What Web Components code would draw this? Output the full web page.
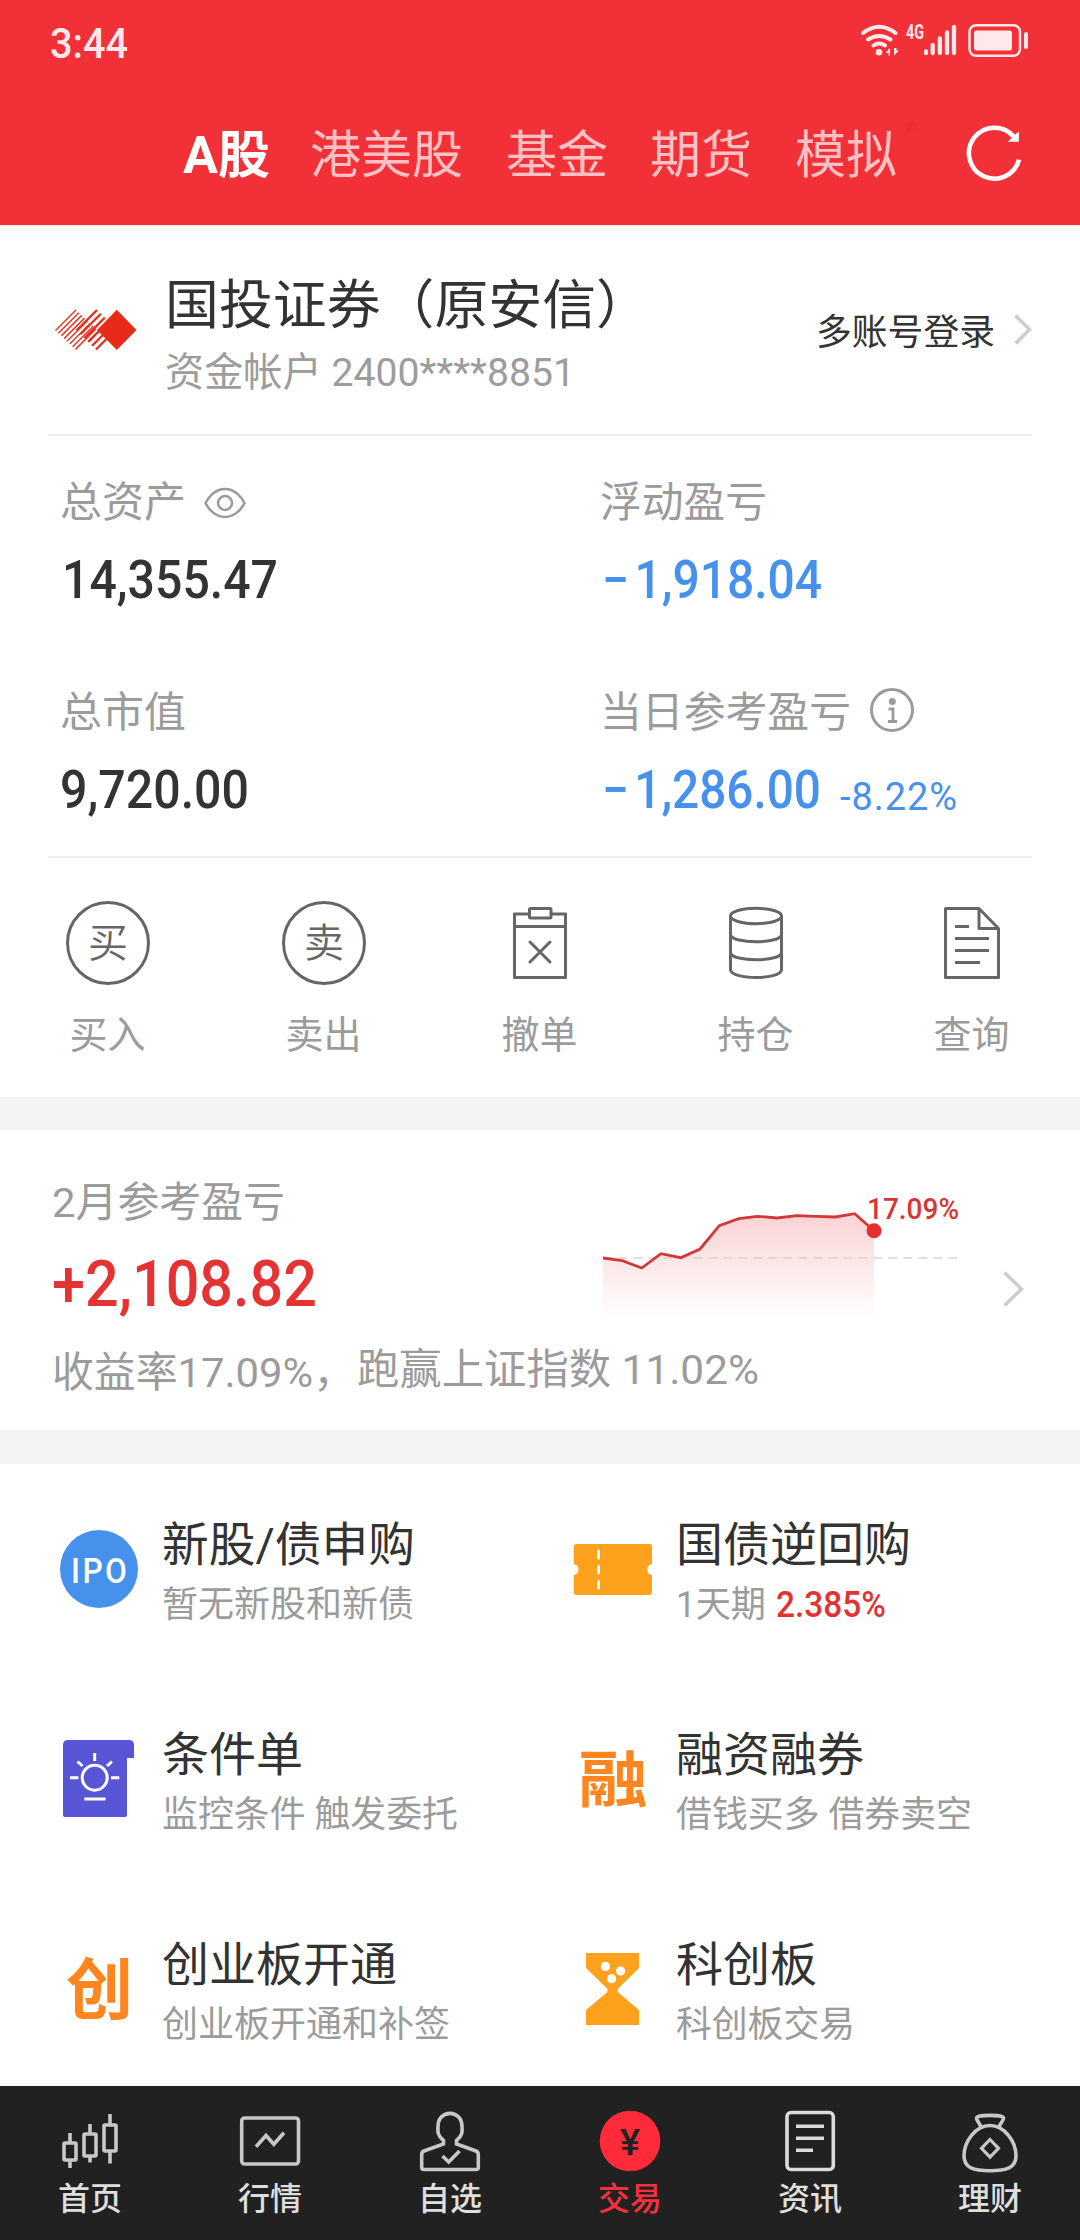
<!DOCTYPE html>
<html lang="zh-CN">
<head>
<meta charset="utf-8">
<title>交易</title>
<style>
html,body{margin:0;padding:0;background:#fff}
body{width:1080px;height:2240px;overflow:hidden;font-family:Roboto,"Noto Sans CJK SC",sans-serif;color:#333}
</style>
</head>
<body>
<trade-app></trade-app>
<script>
const define=(name,html,setup)=>{
  const t=document.createElement('template');t.innerHTML=html;
  customElements.define(name,class extends HTMLElement{
    connectedCallback(){
      if(this.shadowRoot)return;
      this.attachShadow({mode:'open'}).appendChild(t.content.cloneNode(true));
      if(setup)setup.call(this,this.shadowRoot);
    }
  });
};

/* Single line of text condensed or expanded to an exact advance width */
define('fit-text',`<style>:host{display:block;white-space:nowrap;flex:none}span{display:inline-block;transform-origin:0 50%}</style><span><slot></slot></span>`,
function(r){
  const w=+this.getAttribute('w'),s=r.querySelector('span');
  this.style.width=w+'px';
  const n=s.getBoundingClientRect().width;
  if(n)s.style.transform='scaleX('+(w/n)+')';
});

define('status-bar',`<style>
:host{display:flex;height:84px;justify-content:space-between;padding:0 52px 0 50px;color:#ffe8ea;box-sizing:border-box}
fit-text{font-size:42px;line-height:87px;font-weight:500}
svg{display:block;flex:none}
.r{display:flex;align-items:flex-start;padding-top:20px}
.g{font-size:19.5px;font-weight:700;line-height:20px;margin:3px 0 0 5px}
</style>
<fit-text w="78">3:44</fit-text>
<div class="r">
<svg width="42" height="40" viewBox="859 20 42 40" fill="none" stroke="#ffe8ea" stroke-width="4" stroke-linecap="round">
<path d="M863 33Q879 20.500 895.500 33M868 39.500Q879 32.500 890.500 39.500M873.500 45.500Q879 41.500 885 45.500"/>
<circle cx="879" cy="52.300" r="3.300" fill="#ffe8ea" stroke="none"/>
<path d="M886 52.500L890 47.500V55.500H888.500V53H886ZM894 48V55.500L899 50.500H896.500V48Z" fill="#ffe8ea" stroke="none"/></svg>
<fit-text class="g" w="18">4G</fit-text>
<svg width="104" height="40" viewBox="924 20 104 40">
<g stroke="#ffe8ea" stroke-width="4.300" stroke-linecap="round"><path d="M926 51.500V53M932.700 45V53M939.900 38.500V53M947 32.500V53M954 27V53"/></g>
<rect x="969.500" y="25.300" width="50.500" height="30.500" rx="6.500" fill="none" stroke="#ffe8ea" stroke-width="2.400"/>
<rect x="974" y="30.500" width="38" height="20" rx="2.500" fill="#ffe8ea"/>
<rect x="1024" y="32" width="4" height="17" rx="2" fill="#ffe8ea"/></svg>
</div>`);

define('market-tabs',`<style>
:host{display:flex;height:141px;padding:0 54px 0 183px;align-items:flex-start;box-sizing:border-box;color:#ffc0c4;font-size:51px;line-height:60px}
fit-text{margin:42px 42.500px 0 0}
.on{color:#fff;font-weight:700;margin-right:40px}
svg{display:block;margin-top:33px}
.last{margin-right:5px}
</style>
<fit-text class="on" w="87">A股</fit-text><fit-text w="153">港美股</fit-text><fit-text w="102">基金</fit-text><fit-text w="102">期货</fit-text><fit-text class="last" w="102">模拟</fit-text>
<svg width="130" height="80" viewBox="899 117 130 80" fill="none"><circle cx="908" cy="125" r="6" fill="#ec2d34"/>
<path d="M1015.500 135.500A26.600 26.600 0 1 0 1021.200 159.800" stroke="#fff" stroke-width="4.800"/><path d="M1021 130V141.200H1009.500Z" fill="#fff"/></svg>`);

define('chevron-icon',`<style>:host{display:block;flex:none}svg{display:block}</style><svg fill="none" stroke="#ccc" stroke-width="3.500"></svg>`,
function(r){const w=+this.getAttribute('w'),h=+this.getAttribute('h'),s=r.querySelector('svg');
s.setAttribute('width',w);s.setAttribute('height',h);s.innerHTML=`<path d="M1.500 1.500L${w-2.5} ${h/2}L1.500 ${h-1.5}"/>`;});

define('account-row',`<style>
:host{display:flex;height:209px;padding:0 48px 0 54px;box-sizing:border-box;border-top:1px solid #fde4e6}
.logo{display:block;margin:82px 27px 0 0}
.n{font-size:53px;line-height:60px;margin-top:50px}
.s{font-size:39.500px;line-height:50px;margin-top:12px;color:#9c9c9c}
.m{font-size:36px;line-height:50px;margin:82px 19px 0 auto}
chevron-icon{margin-top:88px}
</style>
<svg class="logo" width="84" height="44" viewBox="54 308 84 44"><g stroke="#e2392b" stroke-width="1.500" class="a"></g><g stroke="#e62c1b" stroke-width="2.300" class="b"></g><path d="M116.800 309.800L136.500 330L116.800 350L97 330Z" fill="#e62c19"/></svg>
<div><fit-text class="n" w="485">国投证券（原安信）</fit-text><fit-text class="s" w="410">资金帐户 2400****8851</fit-text></div>
<fit-text class="m" w="179">多账号登录</fit-text><chevron-icon w="18" h="31"></chevron-icon>`,
function(r){
  const stripes=(x,n,dx,dy)=>{let o='';for(let k=0;k<n;k++){const a=x+k*dx,b=330.5+k*dy;o+=`<path d="M${a} ${b}l20.500 -20.500"/>`}return o};
  r.querySelector('.a').innerHTML=stripes(55.500,8,2.850,2.700);
  r.querySelector('.b').innerHTML=stripes(76.500,6,3.900,3.800);
});

define('rule-line',`<style>:host{display:block;height:2px;background:#f0f0f0;margin:0 48px}</style>`);

define('stat-cell',`<style>
:host{display:block;width:540px;height:210px;box-sizing:border-box;padding-left:60px}
.l{display:flex;height:50px;line-height:50px;font-size:41.500px;color:#9b9b9b;align-items:center}
.v{display:flex;height:60px;line-height:60px;font-size:53px;font-weight:500;margin-top:22px;color:#333}
:host([loss]) .v{color:#4691ec}
</style><div class="l"><slot name="label"></slot></div><div class="v"><slot></slot></div>`);

define('asset-stats',`<style>
:host{display:grid;grid-template-columns:540px 540px;grid-template-rows:210px 170px;padding-top:42px;height:420px;box-sizing:border-box}
svg{display:block;margin:-1px 0 0 18px}
.lab{display:flex;align-items:center}
.p{font-size:38px;font-weight:400;margin:7px 0 0 19px;letter-spacing:1px}
.o{margin-left:2px}
i{font-style:normal;letter-spacing:6px}
</style>
<stat-cell><div class="lab" slot="label"><fit-text w="126">总资产</fit-text><svg width="42" height="32" viewBox="0 0 42 32" fill="none" stroke="#9b9b9b" stroke-width="2.600"><path d="M1.500 16C4 11 10.500 2 21 2S38 11 40.500 16C38 21 31.500 30 21 30S4 21 1.500 16Z"/><circle cx="21" cy="16" r="7"/></svg></div><fit-text class="o" w="216">14,355.47</fit-text></stat-cell>
<stat-cell loss><fit-text slot="label" w="167">浮动盈亏</fit-text><fit-text class="o" w="220"><i>−</i>1,918.04</fit-text></stat-cell>
<stat-cell><fit-text slot="label" w="126">总市值</fit-text><fit-text w="189">9,720.00</fit-text></stat-cell>
<stat-cell loss><div class="lab" slot="label"><fit-text w="251">当日参考盈亏</fit-text><svg width="46" height="46" viewBox="0 0 46 46" style="margin:-6px 0 0 18px" fill="none" stroke="#9b9b9b" stroke-width="3"><circle cx="23" cy="23" r="20.500"/><circle cx="23.300" cy="14.500" r="3.500" fill="#9b9b9b" stroke="none"/><path d="M19.500 22H24V34.500M19 34.500H28" stroke-width="2.800"/></svg></div><fit-text class="o" w="219"><i>−</i>1,286.00</fit-text><fit-text class="p" w="118">-8.22%</fit-text></stat-cell>`);

define('action-item',`<style>
:host{display:flex;flex-direction:column;align-items:center;width:216px}
.i{height:86px;display:flex;align-items:center;justify-content:center}
.t{font-size:38px;line-height:50px;color:#9b9b9b;margin:24px 1px 0 0}
::slotted(svg){display:block}
::slotted(.ring){width:84px;height:84px;border:3px solid #666;border-radius:50%;box-sizing:border-box;font-size:40px;line-height:80px;text-align:center;color:#666;font-weight:350}
</style><div class="i"><slot name="icon"></slot></div><div class="t"><slot></slot></div>`);

define('action-bar',`<style>:host{display:flex;height:239px;padding-top:42px;box-sizing:border-box}svg{fill:none;stroke:#666;stroke-width:3}</style>
<action-item><div slot="icon" class="ring">买</div>买入</action-item>
<action-item><div slot="icon" class="ring">卖</div>卖出</action-item>
<action-item><svg slot="icon" width="60" height="76" viewBox="510 905 60 76"><path d="M529 914H514.500V977.500H565.500V914H551M514.500 926.500H565.500" stroke-linejoin="round"/><rect x="529.500" y="908.500" width="21.500" height="9.500" rx="1"/><path d="M530 942L550 962M550 942L530 962" stroke-linecap="round"/></svg>撤单</action-item>
<action-item><svg slot="icon" width="60" height="76" viewBox="726 905 60 76"><ellipse cx="756" cy="916" rx="25.500" ry="7.700"/><path d="M730.500 916V970C732 980 780 980 781.500 970V916M730.500 935C733 944 779 944 781.500 935M730.500 953C733 962 779 962 781.500 953"/></svg>持仓</action-item>
<action-item><svg slot="icon" width="60" height="76" viewBox="942 905 60 76"><path d="M978.500 908.500H945.500V977.500H998.500V928.500L979 908.500V928.500H998.500M955 926.500H969M955 938.500H989M955 950.500H989M955 962.500H980" stroke-linejoin="round"/></svg>查询</action-item>`);

define('gap-band',`<style>:host{display:block;height:33px;background:#f4f4f4}:host([tall]){height:34px}</style>`);

define('profit-card',`<style>
:host{display:flex;height:300px;padding-left:52px;box-sizing:border-box}
.c{width:549px;color:#9b9b9b;font-size:41.500px;line-height:50px;padding-top:48px}
.b{font-size:65.500px;line-height:80px;font-weight:500;color:#e53232;margin-top:16px}
.r{display:flex;margin-top:24px}
.r fit-text+fit-text{margin:-3px 0 0 2px}
.g{width:357px;height:130px;margin-top:60px;position:relative}
.g svg{display:block}
.g fit-text{position:absolute;left:266px;top:4px;font-size:29.500px;line-height:30px;color:#d63636;font-weight:500}
chevron-icon{margin:141px 0 0 45px}
</style>
<div class="c"><fit-text w="233">2月参考盈亏</fit-text><fit-text class="b" w="265">+2,108.82</fit-text>
<div class="r"><fit-text w="303">收益率17.09%，</fit-text><fit-text w="402">跑赢上证指数 11.02%</fit-text></div></div>
<div class="g"><svg width="357" height="130" viewBox="601 1190 357 130"><defs><linearGradient id="f" x1="0" y1="0" x2="0" y2="1"><stop offset="0" stop-color="#f9d3d4"/><stop offset="1" stop-color="#fff"/></linearGradient></defs>
<path d="M603 1258L622.300 1260.700L641.700 1268L661 1253.700L680.700 1257.700L700 1249L719.300 1225.700L738.700 1218.700L757.300 1216.300L777.300 1218L796.700 1215.700L816 1216.300L835.300 1217L854.700 1213.700L874 1230.700V1318.500H603Z" fill="url(#f)"/>
<path d="M603.300 1258H957.500" stroke="#cfcfcf" stroke-opacity=".65" stroke-width="2" stroke-dasharray="9 6"/>
<path d="M603 1258L622.300 1260.700L641.700 1268L661 1253.700L680.700 1257.700L700 1249L719.300 1225.700L738.700 1218.700L757.300 1216.300L777.300 1218L796.700 1215.700L816 1216.300L835.300 1217L854.700 1213.700L874 1230.700" fill="none" stroke="#d43737" stroke-width="2.800"/><circle cx="874" cy="1230.700" r="7.500" fill="#e62f2f"/></svg><fit-text w="92">17.09%</fit-text></div>
<chevron-icon w="21" h="36"></chevron-icon>`);

define('service-item',`<style>
:host{display:flex;height:210px}
.i{width:86px;height:210px;flex:none}
.x{padding:51px 0 0 21px}
.t{font-size:47px;line-height:60px;color:#333;font-weight:400;white-space:nowrap}
.s{font-size:36px;line-height:50px;color:#9b9b9b;margin-top:5px;white-space:nowrap}
::slotted(svg){display:block}
</style><div class="i"><slot name="icon"></slot></div><div class="x"><div class="t"><slot name="t"></slot></div><div class="s"><slot></slot></div></div>`);

define('service-grid',`<style>
:host{display:grid;grid-template-columns:514px 1fr;height:622px;padding-left:55px;box-sizing:border-box;overflow:hidden}
text{font-family:Roboto,"Noto Sans CJK SC",sans-serif}
.q{display:flex}b{color:#e03434;font-weight:500}
</style>
<service-item><svg slot="icon" width="86" height="210" viewBox="55 1464 86 210"><circle cx="99" cy="1569" r="39" fill="#4691ec"/><text transform="translate(71 1582.500) scale(.88 1)" font-size="36" font-weight="500" letter-spacing="2.800" fill="#fff">IPO</text></svg><fit-text slot="t" w="253">新股/债申购</fit-text><fit-text w="252">暂无新股和新债</fit-text></service-item>
<service-item><svg slot="icon" width="86" height="210" viewBox="569 1464 86 210"><rect x="573.700" y="1544" width="78.300" height="51" rx="3" fill="#fea21d"/><circle cx="573" cy="1569.500" r="5.500" fill="#fff"/><circle cx="652.700" cy="1569.500" r="5.500" fill="#fff"/><path d="M598.500 1551V1558M598.500 1566.500V1573M598.500 1581.500V1588" stroke="#fff" stroke-width="3" stroke-linecap="round"/></svg><fit-text slot="t" w="235">国债逆回购</fit-text><div class="q"><fit-text w="90">1天期</fit-text><b><fit-text style="margin-left:10px" w="110">2.385%</fit-text></b></div></service-item>
<service-item><svg slot="icon" width="86" height="210" viewBox="55 1674 86 210"><path d="M68 1740H129Q134 1740 134 1745V1758H127V1815Q127 1817 125 1817H65Q63 1817 63 1815V1745Q63 1740 68 1740Z" fill="#5856d6"/><g fill="none" stroke="#fff" stroke-width="3"><circle cx="94.700" cy="1777.700" r="12.500"/><path d="M94.700 1753V1761M70 1777.700H78.300M111 1777.700H119.300M77.500 1761.500L82.500 1766M112 1761.500L107 1766M84.300 1799H105.500"/></g></svg><fit-text slot="t" w="141">条件单</fit-text><fit-text w="296">监控条件 触发委托</fit-text></service-item>
<service-item><svg slot="icon" width="86" height="210" viewBox="569 1674 86 210"><text transform="translate(578.500 1801.500) scale(1.050 .93)" font-size="66" font-weight="700" fill="#ff861f">融</text></svg><fit-text slot="t" w="188">融资融券</fit-text><fit-text w="296">借钱买多 借券卖空</fit-text></service-item>
<service-item><svg slot="icon" width="86" height="210" viewBox="55 1884 86 210"><text x="66" y="2014" font-size="67" font-weight="700" fill="#ff861f">创</text></svg><fit-text slot="t" w="235">创业板开通</fit-text><fit-text w="288">创业板开通和补签</fit-text></service-item>
<service-item><svg slot="icon" width="86" height="210" viewBox="569 1884 86 210"><path d="M586 1953H639V1968L617.800 1989V1992L639 2010V2025H586V2010L607.500 1992V1989L586 1968Z" fill="#fea21d"/><g fill="#fff"><circle cx="605.400" cy="1966.400" r="4.600"/><circle cx="620.600" cy="1971" r="4.600"/><circle cx="611.600" cy="1978.700" r="4.600"/></g></svg><fit-text slot="t" w="141">科创板</fit-text><fit-text w="179">科创板交易</fit-text></service-item>`);

define('nav-item',`<style>
:host{display:flex;flex-direction:column;align-items:center;width:180px;color:#dedede}
:host([on]){color:#f5313d}
.t{font-size:32px;line-height:44px;font-weight:500;margin-top:1px}
::slotted(svg){display:block}
</style><slot name="icon"></slot><div class="t"><slot></slot></div>`);

define('nav-bar',`<style>:host{display:flex;height:154px;background:#212121;padding-top:20px;box-sizing:border-box}svg{fill:none;stroke:#c8c8c8;stroke-width:3.600}text{font-family:Roboto,sans-serif}</style>
<nav-item><svg slot="icon" width="70" height="70" viewBox="55 2106 70 70"><rect x="64" y="2143" width="12" height="17" rx="1"/><rect x="84" y="2134" width="12" height="22" rx="1"/><rect x="104" y="2125" width="12" height="26" rx="1"/><path d="M70 2133V2142M70 2161V2168M90 2124V2133M90 2157V2162.500M110 2114V2124M110 2152V2163.500"/></svg>首页</nav-item>
<nav-item><svg slot="icon" width="70" height="70" viewBox="235 2106 70 70"><rect x="241.700" y="2118" width="56.800" height="46" rx="3"/><path d="M256 2146.700L266 2135.500L273.800 2144.300L284 2132.700"/></svg>行情</nav-item>
<nav-item><svg slot="icon" width="70" height="70" viewBox="415 2106 70 70"><path d="M443.500 2140.500C436.500 2135 438 2130 438 2126.500C438 2109 462 2109 462 2126.500C462 2130 463.500 2135 456.500 2140.500V2144L476 2151Q478.300 2152 478.300 2154.500V2167.500Q478.300 2169.500 476 2169.500H424Q421.700 2169.500 421.700 2167.500V2154.500Q421.700 2152 424 2151L443.500 2144Z"/><path d="M442.500 2156L448.700 2162L459.500 2151"/></svg>自选</nav-item>
<nav-item on><svg slot="icon" width="70" height="70" viewBox="595 2106 70 70"><circle cx="630" cy="2141" r="30.300" fill="#ff2a3a" stroke="none"/><text transform="translate(630 2154.500) scale(1.050 1)" text-anchor="middle" font-size="36" font-weight="500" fill="#212121" stroke="none">¥</text></svg>交易</nav-item>
<nav-item><svg slot="icon" width="70" height="70" viewBox="775 2106 70 70" style="stroke:#dcdcdc"><rect x="787" y="2112.500" width="46.300" height="57" rx="4"/><path d="M796 2126.300H824M796 2138.300H824M796 2150.300H813"/></svg>资讯</nav-item>
<nav-item><svg slot="icon" width="70" height="70" viewBox="955 2106 70 70"><path d="M981 2127C979 2122 976.500 2121 976.500 2118C976.500 2114.500 1003.500 2114.500 1003.500 2118C1003.500 2121 1001 2122 999 2127M990 2125.500C976 2125.500 964 2141 964 2156C964 2168 974 2170.700 990 2170.700S1016 2168 1016 2156C1016 2141 1004 2125.500 990 2125.500Z"/><path d="M990 2139.500L998.500 2148.300L990 2157.200L981.500 2148.300Z" stroke-width="3.200"/></svg>理财</nav-item>`);

define('trade-app',`<style>:host{display:flex;flex-direction:column;width:1080px;height:2240px;background:#fff}.top{background:#f23038}</style>
<div class="top"><status-bar></status-bar><market-tabs></market-tabs></div>
<account-row></account-row><rule-line></rule-line><asset-stats></asset-stats><rule-line></rule-line><action-bar></action-bar>
<gap-band></gap-band><profit-card></profit-card><gap-band tall></gap-band><service-grid></service-grid><nav-bar></nav-bar>`);
</script>
</body>
</html>
